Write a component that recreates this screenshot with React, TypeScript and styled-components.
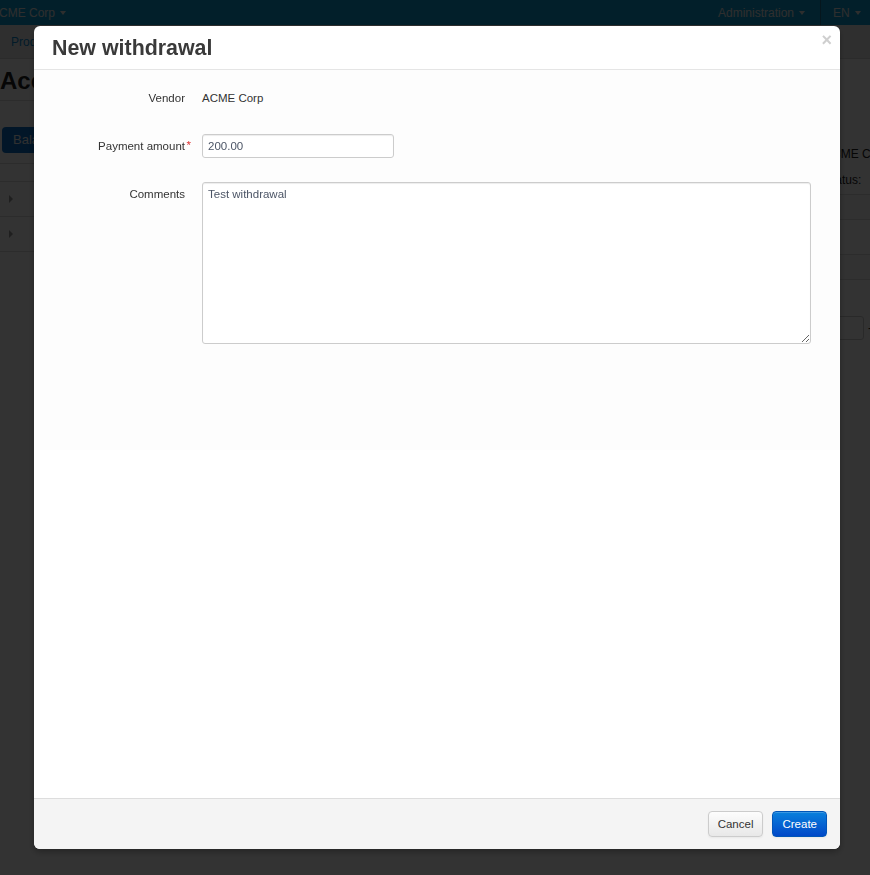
import styled, { createGlobalStyle } from 'styled-components';

const GlobalStyle = createGlobalStyle`
  html, body {
    margin: 0;
    padding: 0;
    background: #fff;
    font-family: 'Liberation Sans', Arial, sans-serif;
    font-size: 12px;
    color: #333;
    overflow: hidden;
  }
`;

/* ---------- page behind the modal ---------- */

const Page = styled.div`
  width: 870px;
  height: 875px;
  overflow: hidden;
`;

const Navbar = styled.div`
  height: 25px;
  background: #0c9cd0;
  display: flex;
  align-items: center;
  color: #e6e6e6;
  font-size: 12px;
`;

const Brand = styled.span`
  margin-left: -9px;
  flex: 1;
  display: flex;
  align-items: center;
  gap: 5px;
`;

const NavItem = styled.span<{ $divider?: boolean }>`
  box-sizing: border-box;
  padding: ${(p) => (p.$divider ? '0 0 0 12px' : '0 15px')};
  width: ${(p) => (p.$divider ? '50px' : 'auto')};
  height: 25px;
  display: flex;
  align-items: center;
  gap: 5px;
  border-left: ${(p) => (p.$divider ? '1px solid #1a6e90' : 'none')};
`;

const Caret = styled.span`
  border-left: 3px solid transparent;
  border-right: 3px solid transparent;
  border-top: 4px solid currentColor;
`;

const SubNav = styled.div`
  height: 33px;
  background: #ececec;
  border-bottom: 1px solid #d8d8d8;
  display: flex;
  align-items: center;
  padding-left: 11px;
  color: #0a88cc;
`;

const Container = styled.div`
  display: grid;
  grid-template-columns: 800px 100px;
  gap: 24px;
`;

const Main = styled.div`
  display: flex;
  flex-direction: column;
`;

const PageTitle = styled.h1`
  margin: 0;
  padding: 8px 0 6px;
  font-size: 24px;
  font-weight: bold;
  color: #222;
  border-bottom: 1px solid #ddd;
  line-height: 27px;
`;

const Toolbar = styled.div`
  padding: 26px 0 10px 2px;
  border-bottom: 1px solid #ddd;
`;

const PageButton = styled.span`
  display: inline-block;
  height: 26px;
  line-height: 26px;
  padding: 0 11px;
  border-radius: 4px;
  background: #0a6ec8;
  color: #eee;
  font-size: 13px;
`;

const TableHead = styled.div`
  height: 17px;
  border-bottom: 1px solid #ddd;
`;

const TableRow = styled.div`
  height: 34px;
  display: flex;
  align-items: center;
  padding-left: 9px;
  border-bottom: 1px solid #ddd;
`;

const RowCaret = styled.span`
  border-top: 4px solid transparent;
  border-bottom: 4px solid transparent;
  border-left: 4px solid #999;
`;

const Sidebar = styled.div`
  display: flex;
  flex-direction: column;
  padding-top: 82px;
  font-size: 12px;
  color: #222;
`;

const SideLine = styled.div<{ $h: number; $shade?: boolean }>`
  height: ${(p) => p.$h}px;
  border-bottom: 1px solid #ddd;
  background: ${(p) => (p.$shade ? '#f9f9f9' : '#fff')};
`;

const SideText = styled.div`
  height: 26px;
  line-height: 26px;
`;

const RangeRow = styled.div`
  margin-top: 36px;
  display: flex;
  align-items: center;
  gap: 4px;
`;

const RangeInput = styled.div`
  width: 38px;
  height: 22px;
  border: 1px solid #ccc;
  border-radius: 3px;
  background: #fff;
`;

/* ---------- modal ---------- */

const Backdrop = styled.div`
  position: fixed;
  inset: 0;
  background: rgba(0, 0, 0, 0.8);
`;

const Modal = styled.div`
  position: fixed;
  top: 26px;
  left: 34px;
  width: 806px;
  height: 823px;
  background: #fff;
  border-radius: 6px;
  box-shadow: 0 3px 7px rgba(0, 0, 0, 0.3);
  display: flex;
  flex-direction: column;
  overflow: hidden;
`;

const ModalHeader = styled.div`
  position: relative;
  height: 43px;
  border-bottom: 1px solid #e5e5e5;
  display: flex;
  align-items: center;
  padding-left: 18px;
`;

const ModalTitle = styled.h3`
  margin: 0;
  font-size: 21.4px;
  font-weight: bold;
  color: #3a3a3a;
  line-height: 26px;
`;

const Close = styled.button`
  position: absolute;
  top: 5px;
  right: 8px;
  border: 0;
  background: none;
  padding: 0;
  font-family: 'Liberation Sans', Arial, sans-serif;
  font-size: 18px;
  font-weight: bold;
  color: #cfcfcf;
  line-height: 18px;
`;

const ModalBody = styled.div`
  flex: 1;
`;

const Form = styled.form`
  background: #fdfdfd;
  min-height: 364px;
  padding-top: 16px;
  padding-right: 30px;
  display: grid;
  grid-template-columns: 151px 1fr;
  column-gap: 17px;
  row-gap: 24px;
  align-content: start;
  font-size: 11.5px;
`;

const Label = styled.label`
  position: relative;
  text-align: right;
  line-height: 24px;
  color: #333;
  align-self: start;
`;

const Required = styled.span`
  position: absolute;
  right: -6px;
  top: -1px;
  color: #d33;
`;

const Value = styled.div`
  line-height: 24px;
  color: #333;
`;

const Input = styled.input`
  box-sizing: border-box;
  display: block;
  width: 192px;
  height: 24px;
  border: 1px solid #ccc;
  border-radius: 3px;
  padding: 0 5px;
  font-family: 'Liberation Sans', Arial, sans-serif;
  font-size: 11.5px;
  color: #4c5566;
  box-shadow: inset 0 1px 1px rgba(0, 0, 0, 0.075);
`;

const TextArea = styled.textarea`
  box-sizing: border-box;
  display: block;
  width: 609px;
  height: 162px;
  border: 1px solid #ccc;
  border-radius: 3px;
  padding: 4px 5px;
  font-family: 'Liberation Sans', Arial, sans-serif;
  font-size: 11.5px;
  line-height: 15px;
  color: #4c5566;
  box-shadow: inset 0 1px 1px rgba(0, 0, 0, 0.075);
`;

const ModalFooter = styled.div`
  background: #f4f4f4;
  border-top: 1px solid #ddd;
  display: flex;
  justify-content: flex-end;
  align-items: flex-start;
  gap: 9px;
  padding: 12px 13px 0 0;
  box-sizing: border-box;
  height: 51px;
`;

const Button = styled.button<{ $primary?: boolean }>`
  height: 26px;
  padding: 0 9px;
  border-radius: 4px;
  font-family: 'Liberation Sans', Arial, sans-serif;
  font-size: 11.5px;
  cursor: pointer;
  border: 1px solid ${(p) => (p.$primary ? '#0055b8' : '#ccc')};
  color: ${(p) => (p.$primary ? '#fff' : '#333')};
  background: ${(p) =>
    p.$primary
      ? 'linear-gradient(#0a80dc, #0048c8)'
      : 'linear-gradient(#fdfdfd, #e8e8e8)'};
  box-shadow: inset 0 1px 0 rgba(255, 255, 255, 0.2), 0 1px 2px rgba(0, 0, 0, 0.05);
`;

const App = () => {
  return (
    <>
      <GlobalStyle />
      <Page>
        <Navbar>
          <Brand>
            ACME Corp <Caret />
          </Brand>
          <NavItem>
            Administration <Caret />
          </NavItem>
          <NavItem $divider>
            EN <Caret />
          </NavItem>
        </Navbar>
        <SubNav>Products</SubNav>
        <Container>
          <Main>
            <PageTitle>Accounting</PageTitle>
            <Toolbar>
              <PageButton>Balance</PageButton>
            </Toolbar>
            <TableHead />
            <TableRow>
              <RowCaret />
            </TableRow>
            <TableRow>
              <RowCaret />
            </TableRow>
          </Main>
          <Sidebar>
            <SideText>ACME Corp</SideText>
            <SideText>Status:</SideText>
            <SideLine $h={1} />
            <SideLine $h={24} $shade />
            <SideLine $h={34} />
            <SideLine $h={24} $shade />
            <RangeRow>
              <RangeInput />-
            </RangeRow>
          </Sidebar>
        </Container>
      </Page>
      <Backdrop />
      <Modal>
        <ModalHeader>
          <ModalTitle>New withdrawal</ModalTitle>
          <Close type="button">×</Close>
        </ModalHeader>
        <ModalBody>
          <Form>
            <Label>Vendor</Label>
            <Value>ACME Corp</Value>
            <Label>
              Payment amount<Required>*</Required>
            </Label>
            <div>
              <Input defaultValue="200.00" />
            </div>
            <Label>Comments</Label>
            <div>
              <TextArea defaultValue="Test withdrawal" />
            </div>
          </Form>
        </ModalBody>
        <ModalFooter>
          <Button type="button">Cancel</Button>
          <Button type="button" $primary>
            Create
          </Button>
        </ModalFooter>
      </Modal>
    </>
  );
};

export default App;
